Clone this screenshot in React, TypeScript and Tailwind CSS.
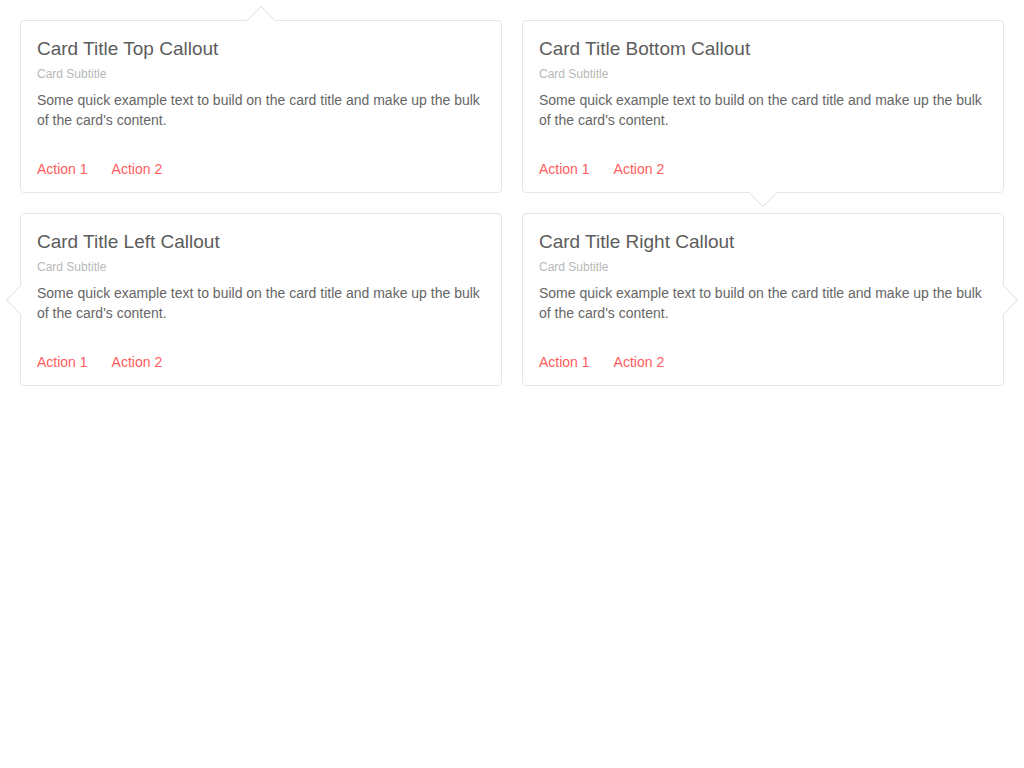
import React from "react";

type Dir = "top" | "bottom" | "left" | "right";

function Arrow({ dir }: { dir: Dir }) {
  if (dir === "top")
    return <div className="absolute left-1/2 -top-[11px] -ml-[10px] h-5 w-5 rotate-45 border-t border-l border-[#e6e6e6] bg-white" />;
  if (dir === "bottom")
    return <div className="absolute left-1/2 -bottom-[11px] -ml-[10px] h-5 w-5 rotate-45 border-b border-r border-[#e6e6e6] bg-white" />;
  if (dir === "left")
    return <div className="absolute top-1/2 -left-[11px] -mt-[10px] h-5 w-5 rotate-45 border-b border-l border-[#e6e6e6] bg-white" />;
  return <div className="absolute top-1/2 -right-[11px] -mt-[10px] h-5 w-5 rotate-45 border-t border-r border-[#e6e6e6] bg-white" />;
}

function Card({ title, dir }: { title: string; dir: Dir }) {
  return (
    <div className="relative rounded border border-[#e6e6e6] bg-white px-4">
      <Arrow dir={dir} />
      <div className="relative">
        <h2 className="mt-4 text-[19px] leading-6 text-[#5c5c5c]">{title}</h2>
        <div className="mt-[5px] text-xs leading-4 text-[#b8b8b8]">Card Subtitle</div>
        <p className="mt-2 text-sm leading-5 text-[#666666]">
          Some quick example text to build on the card title and make up the bulk of the card's content.
        </p>
        <div className="mt-[29px] mb-[13px] flex gap-6 text-sm leading-5 text-[#ff5c5c]">
          <span>Action 1</span>
          <span>Action 2</span>
        </div>
      </div>
    </div>
  );
}

export default function App() {
  return (
    <div className="min-h-[768px] bg-white p-5" style={{ fontFamily: '"Liberation Sans", Arial, sans-serif' }}>
      <div className="grid grid-cols-2 gap-5">
        <Card title="Card Title Top Callout" dir="top" />
        <Card title="Card Title Bottom Callout" dir="bottom" />
        <Card title="Card Title Left Callout" dir="left" />
        <Card title="Card Title Right Callout" dir="right" />
      </div>
    </div>
  );
}
